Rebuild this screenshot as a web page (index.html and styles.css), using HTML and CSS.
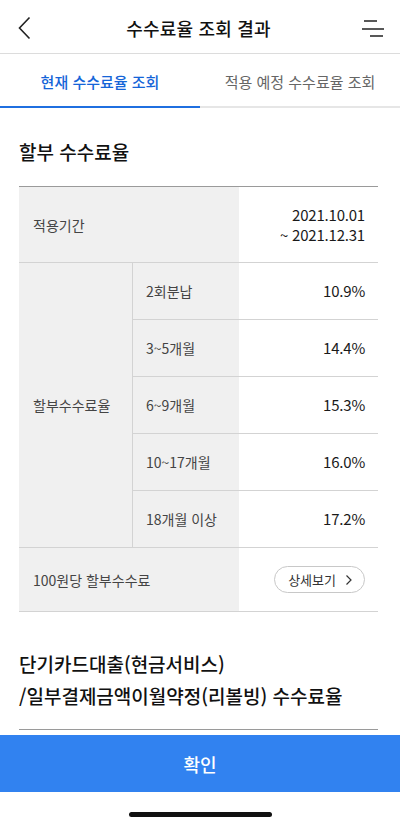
FILE: index.html
```html
<!DOCTYPE html>
<html lang="ko">
<head>
<meta charset="utf-8">
<title>수수료율 조회 결과</title>
<link rel="stylesheet" href="styles.css">
</head>
<body>
<div class="page">
  <div class="main">
    <header class="header">
      <button class="icon-btn back" aria-label="뒤로">
        <svg width="14" height="24" viewBox="0 0 14 24"><path d="M11.5 1.5 L1.5 12 L11.5 22.5" fill="none" stroke="#222" stroke-width="1.6"/></svg>
      </button>
      <h1 class="title">수수료율 조회 결과</h1>
      <button class="icon-btn menu" aria-label="메뉴">
        <svg width="26" height="22" viewBox="0 0 26 22"><path d="M4 4 H17 M2 12 H24 M10 19 H23" fill="none" stroke="#222" stroke-width="1.5"/></svg>
      </button>
    </header>
    <nav class="tabs">
      <div class="tab active">현재 수수료율 조회</div>
      <div class="tab">적용 예정 수수료율 조회</div>
    </nav>
    <section class="section">
      <h2 class="sec-title">할부 수수료율</h2>
      <div class="table">
        <div class="cell label span2 b">적용기간</div>
        <div class="cell value b">2021.10.01<br>~ 2021.12.31</div>
        <div class="cell label rowspan b">할부수수료율</div>
        <div class="cell label sub b">2회분납</div>
        <div class="cell value b">10.9%</div>
        <div class="cell label sub b">3~5개월</div>
        <div class="cell value b">14.4%</div>
        <div class="cell label sub b">6~9개월</div>
        <div class="cell value b">15.3%</div>
        <div class="cell label sub b">10~17개월</div>
        <div class="cell value b">16.0%</div>
        <div class="cell label sub b">18개월 이상</div>
        <div class="cell value b">17.2%</div>
        <div class="cell label span2 b">100원당 할부수수료</div>
        <div class="cell value b">
          <button class="detail-btn">상세보기
            <svg width="8" height="12" viewBox="0 0 8 12"><path d="M1.5 1.5 L6 6 L1.5 10.5" fill="none" stroke="#333" stroke-width="1.2"/></svg>
          </button>
        </div>
      </div>
    </section>
    <section class="section second">
      <h2 class="sec-title multi">단기카드대출(현금서비스)<br>/일부결제금액이월약정(리볼빙) 수수료율</h2>
      <div class="table top-only"></div>
    </section>
  </div>
  <footer class="footer">
    <button class="confirm">확인</button>
    <div class="home-area"><div class="home-bar"></div></div>
  </footer>
</div>
</body>
</html>
```

FILE: styles.css
```css
* { box-sizing: border-box; margin: 0; padding: 0; }
html, body { width: 400px; height: 826px; background: #fff; }
body {
  font-family: "Noto Sans CJK KR", "Noto Sans", sans-serif;
  color: #222;
  overflow: hidden;
}
button { font-family: inherit; background: none; border: none; cursor: pointer; }

.page { display: flex; flex-direction: column; height: 826px; }
.main { flex: 1; overflow: hidden; }

.header {
  height: 54px;
  display: flex;
  align-items: center;
  justify-content: space-between;
  border-bottom: 1px solid #dcdcdc;
  padding: 0 14px 0 17px;
}
.icon-btn { display: flex; align-items: center; justify-content: center; }
.back { width: 16px; height: 24px; margin-top: 2px; }
.menu { width: 26px; height: 22px; margin-top: 2px; }
.title {
  font-size: 18px;
  font-weight: 500;
  letter-spacing: 0.2px;
  color: #111;
  margin-top: 2px;
  margin-left: 4px;
}

.tabs {
  display: flex;
  height: 54px;
  border-bottom: 2px solid #e6e6e6;
}
.tab {
  flex: 1;
  display: flex;
  align-items: center;
  justify-content: center;
  font-size: 15px;
  color: #666;
  margin-bottom: -2px;
  border-bottom: 2px solid transparent;
  padding-top: 2px;
}
.tab.active {
  color: #1565d8;
  font-weight: 500;
  border-bottom-color: #1f6fe0;
}

.section { padding: 30px 22px 0 19px; }
.sec-title {
  font-size: 19px;
  font-weight: 500;
  line-height: 28px;
  color: #111;
}
.table {
  margin-top: 20px;
  border-top: 1px solid #9a9a9a;
  display: grid;
  grid-template-columns: 114px 106px 1fr;
  grid-template-rows: 76px repeat(5, 57px) 64px;
}
.cell {
  display: flex;
  align-items: center;
  font-size: 14px;
}
.b { border-bottom: 1px solid #d3d3d3; }
.label { background: #f0f0f0; color: #444; padding-left: 14px; }
.span2 { grid-column: span 2; }
.rowspan { grid-row: span 5; border-right: 1px solid #d3d3d3; }
.sub { padding-left: 13px; }
.value {
  justify-content: flex-end;
  text-align: right;
  padding-right: 13px;
  font-size: 15px;
  line-height: 20px;
  color: #1a1a1a;
  letter-spacing: -0.2px;
}
.detail-btn {
  display: flex;
  align-items: center;
  gap: 9px;
  height: 27px;
  padding: 0 11px 0 13px;
  border: 1px solid #c8c8c8;
  border-radius: 14px;
  font-size: 13px;
  color: #333;
  background: #fff;
}

.second { padding-top: 36px; }
.sec-title.multi { line-height: 32px; }
.table.top-only { margin-top: 17px; display: block; height: 10px; }

.footer { flex: none; }
.confirm {
  display: block;
  width: 100%;
  height: 57px;
  background: #3182f0;
  color: #fff;
  font-size: 18px;
  font-weight: 500;
}
.home-area { height: 34px; display: flex; justify-content: center; padding-top: 20px; }
.home-bar { width: 143px; height: 5px; border-radius: 3px; background: #111; }
```
